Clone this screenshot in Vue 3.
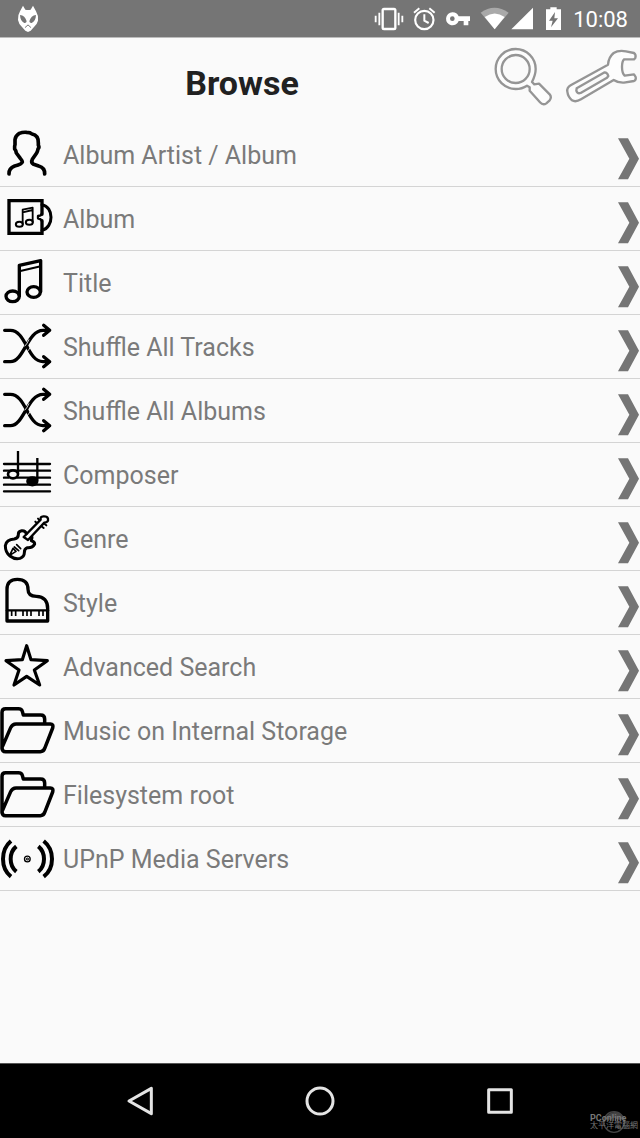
<script setup>
const items = [
  { icon: 'artist', label: 'Album Artist / Album', box: '0 9 168 189' },
  { icon: 'album', label: 'Album', box: '0 201 168 189' },
  { icon: 'title', label: 'Title', box: '0 3 168 189' },
  { icon: 'shuffle', label: 'Shuffle All Tracks', box: '0 195 168 189' },
  { icon: 'shuffle', label: 'Shuffle All Albums', box: '0 195 168 189' },
  { icon: 'composer', label: 'Composer', box: '0 189 168 189' },
  { icon: 'genre', label: 'Genre', box: '0 6 168 189' },
  { icon: 'style', label: 'Style', box: '0 198 168 189' },
  { icon: 'star', label: 'Advanced Search', box: '0 0 168 189' },
  { icon: 'folder', label: 'Music on Internal Storage', box: '0 192 168 189' },
  { icon: 'folder', label: 'Filesystem root', box: '0 192 168 189' },
  { icon: 'upnp', label: 'UPnP Media Servers', box: '0 201 168 189' }
]
</script>

<template>
  <div class="screen">
    <div class="status">
      <svg class="fox" viewBox="51 0 66 111" width="22" height="37" aria-hidden="true">
        <path fill="#fff" d="M69 17L76 29Q84 31 92 29L99 17L108 34Q116 47 114 62Q111 73 102 81L92 92L84 96L76 92L66 81Q56 72 54 60Q53 45 60 34Z" />
        <path fill="#757575" d="M60 45Q75 46 80 64Q79 70 73 69Q61 64 60 45ZM108 45Q93 46 88 64Q89 70 95 69Q107 64 108 45Z" />
        <path fill="none" stroke="#757575" stroke-width="3" d="M76 83Q79 77 84 75Q89 77 92 83" />
      </svg>
      <div class="tray">
        <svg viewBox="42 0 90 111" width="30" height="37" aria-hidden="true">
          <rect x="68" y="27" width="38" height="60" rx="4" fill="none" stroke="#fff" stroke-width="7" />
          <path stroke="#fff" stroke-width="5.500" d="M58 38V76M47 47V67M116 38V76M127 47V67" />
        </svg>
        <svg viewBox="159 0 69 111" width="23" height="37" aria-hidden="true">
          <circle cx="193" cy="60" r="27.500" fill="none" stroke="#fff" stroke-width="6.500" />
          <path fill="none" stroke="#fff" stroke-width="6" d="M162 38L178 25M224 38L208 25M193 43V62L206 69" />
        </svg>
        <svg viewBox="255 0 78 111" width="26" height="37" aria-hidden="true">
          <path fill="#fff" fill-rule="evenodd" d="M277 37A19.500 19.500 0 1 0 296 63H311V76H325V63H330V49H296A20 20 0 0 0 277 37ZM277 49A7 7 0 1 1 277 63A7 7 0 1 1 277 49Z" />
        </svg>
        <svg viewBox="360 0 162 111" width="54" height="37" aria-hidden="true">
          <path fill="#a9a9a9" d="M362 38Q403 8 446 38L404 88Z" />
          <path fill="#fff" d="M374 51Q404 30 434 51L404 88Z" />
          <path fill="#fff" d="M454 88L519 23V88Z" />
        </svg>
        <svg viewBox="549 0 57 111" width="19" height="37" aria-hidden="true">
          <path fill="#fff" d="M571 22H590V28H603V90H558V28H571Z" />
          <path fill="#757575" d="M585 36L567 62H578L573 82L594 55H583Z" />
        </svg>
        <time class="clock">10:08</time>
      </div>
    </div>

    <header class="header">
      <h1>Browse</h1>
      <button class="tool" aria-label="Search">
        <svg viewBox="36 0 210 255" width="70" height="85">
          <g fill="#fdfdfd" stroke="#959595" stroke-width="7" stroke-linejoin="round">
            <path d="M156 132Q167 110 167 93A60 60 0 1 0 107 153Q126 153 141 143L149 148V158L180 193Q189 203 199 196L209 187Q216 178 209 169L177 137L163 139Z" />
            <circle cx="107" cy="93" r="42" fill="#fafafa" />
          </g>
        </svg>
      </button>
      <button class="tool" aria-label="Settings">
        <svg viewBox="246 0 234 255" width="78" height="85">
          <g fill="#fdfdfd" stroke="#959595" stroke-width="7" stroke-linejoin="round">
            <path d="M384 80Q386 57 401 45Q415 36 438 40L462 45Q469 50 466 60L462 64H432Q426 70 426 87Q426 105 434 113L462 109L467 117Q469 126 462 129L432 134Q414 135 401 126L303 184Q287 194 276 187Q264 177 262 161Q260 149 272 142Z" />
            <path fill="#fafafa" d="M290 151L374 103Q382 103 385 114L381 119L302 165Q292 168 289 158Z" />
          </g>
        </svg>
      </button>
    </header>

    <main class="content">
      <ul class="list">
        <li v-for="item in items" :key="item.label">
          <button class="row">
            <svg class="icon" :viewBox="item.box" width="56" height="63" aria-hidden="true">
              <path v-if="item.icon === 'artist'" stroke-width="11" d="M27 162Q26 145 44 138Q65 133 67 126Q67 122 61 115L49 99Q48 91 44 87Q43 79 45 74V59Q46 48 58 40Q68 36 80 37Q91 37 96 42Q116 46 115 69V76Q119 81 114 87Q113 93 110 99L97 118Q92 128 101 133L116 138Q135 143 134 162" />
              <g v-else-if="item.icon === 'album'">
                <path stroke-width="10" stroke-linejoin="miter" d="M126 283V242H27V340H126V302" />
                <path stroke-width="7" d="M126 280L122 286L114 288V295L122 298L126 304" />
                <path stroke-width="9" d="M126 254C162 260 162 322 126 331" />
                <path stroke-width="5.500" d="M68 312V269L98 263V306M68 277L98 270" />
                <ellipse cx="58" cy="313" rx="10.500" ry="7.500" stroke-width="6" />
                <ellipse cx="88" cy="307" rx="10.500" ry="7.500" stroke-width="6" />
              </g>
              <g v-else-if="item.icon === 'title'">
                <path stroke-width="10" d="M58 137V46L122 32V125" />
                <path stroke-width="6" d="M58 64L122 49" />
                <ellipse cx="38" cy="139" rx="20" ry="16" stroke-width="10" />
                <ellipse cx="101" cy="126" rx="20" ry="16" stroke-width="10" />
              </g>
              <g v-else-if="item.icon === 'shuffle'" stroke-width="10">
                <path d="M14 335H31C72 335 82 241 129 241H149M131 226L149 241L131 256" />
                <path d="M14 241H31C78 241 82 335 129 335H149M131 320L149 335L131 350" />
                <path stroke="#fafafa" stroke-width="2.500" stroke-linecap="butt" d="M74 289Q82 281 87 268M79 308Q87 300 93 288" />
              </g>
              <g v-else-if="item.icon === 'composer'">
                <path stroke-width="7" d="M12 252H150M12 272H150M52 293H150M12 314H150M12 334H150M12 293H24" />
                <path stroke-width="7" stroke-linecap="butt" d="M54 213V282M112 234V302" />
                <ellipse cx="39" cy="283" rx="15" ry="12" fill="#fafafa" stroke-width="8" />
                <ellipse cx="97" cy="304" rx="15" ry="12" fill="#000" stroke-width="7" />
              </g>
              <g v-else-if="item.icon === 'genre'">
                <path stroke-width="9" d="M79 86Q76 76 65 77Q54 79 55 89Q55 99 43 102Q19 103 16 122Q16 142 30 153Q44 164 60 160Q73 155 73 143Q73 131 82 128Q98 129 104 117Q104 109 94 107L96 97" />
                <path stroke-width="7" d="M71 96L122 44Q120 35 130 34Q142 33 144 41Q146 52 133 53L84 105Z" />
                <path stroke-width="6" d="M111 54L106 50M119 46L114 41M126 65L131 69M134 57L139 61" />
                <path stroke-width="5" d="M50 119L62 131M43 126L56 137M39 130L48 139L29 151Z" />
              </g>
              <g v-else-if="item.icon === 'style'">
                <path stroke-width="10" d="M21 348V253Q21 223 52 223Q84 223 84 253Q84 274 109 274Q143 275 143 311V348Z" />
                <path stroke-width="7" d="M21 316H144" />
                <path stroke-width="5" stroke-linecap="butt" d="M35 317V333M47 317V333M69 317V333M81 317V333M93 317V333M117 317V333M129 317V333" />
              </g>
              <path v-else-if="item.icon === 'star'" stroke-width="9.500" d="M80 32L93 74L142 77L103 105L119 150L80 124L42 150L57 105L18 77L67 74Z" />
              <path v-else-if="item.icon === 'folder'" stroke-width="10.500" d="M6 342V232Q6 221 17 221H55Q65 221 67 229L70 240H122Q134 240 134 252V265M6 338L32 278Q37 267 48 267H151Q161 267 158 279L135 338Q131 350 121 350H17Q6 350 6 338" />
              <g v-else-if="item.icon === 'upnp'">
                <path stroke-width="12" stroke-linecap="butt" d="M33 243Q9 263 9 297Q9 331 33 350M49 259Q32 273 32 297Q32 321 49 335M131 243Q156 263 156 297Q156 331 131 350M115 259Q132 273 132 297Q132 321 115 335" />
                <circle cx="82" cy="297" r="8.500" stroke-width="4" />
                <circle cx="82" cy="297" r="3" stroke-width="3" />
              </g>
            </svg>
            <span class="label">{{ item.label }}</span>
            <svg class="chevron" viewBox="174 9 66 189" width="22" height="63" aria-hidden="true">
              <path d="M174 55H204L237 116L204 178H174L208 116Z" />
            </svg>
          </button>
        </li>
      </ul>
    </main>

    <nav class="nav" aria-label="System">
      <button aria-label="Back">
        <svg viewBox="0 0 90 90" width="30" height="30"><path d="M79 7V83L12 45Z" /></svg>
      </button>
      <button aria-label="Home">
        <svg viewBox="0 0 90 90" width="30" height="30"><circle cx="45" cy="45" r="39" /></svg>
      </button>
      <button aria-label="Recent apps">
        <svg viewBox="0 0 90 90" width="30" height="30"><rect x="11" y="11" width="68" height="68" /></svg>
      </button>
      <div class="mark">
        <svg viewBox="0 0 72 72" width="24" height="24" aria-hidden="true">
          <circle cx="36" cy="36" r="31" fill="none" stroke="#444" stroke-width="4" />
          <path fill="#444" d="M8 27Q20 6 38 6Q57 8 64 24Q56 32 44 27Q32 18 27 30Z" />
        </svg>
        <span class="brand">PConline</span>
        <span class="brand-cn">太平洋電腦網</span>
      </div>
    </nav>
  </div>
</template>

<style>
body {
  background: #fafafa;
}
</style>

<style scoped>
.screen {
  display: flex;
  flex-direction: column;
  min-height: 100vh;
  background: #fafafa;
  font-family: Roboto, "Noto Sans CJK SC", sans-serif;
}
svg {
  display: block;
  flex: none;
}
button {
  margin: 0;
  padding: 0;
  border: 0;
  background: none;
  font: inherit;
  color: inherit;
  cursor: pointer;
}
.status {
  display: flex;
  justify-content: space-between;
  padding: 0 12px 0 17px;
  background: #757575;
  border-bottom: 1px solid #bcbcbc;
}
.tray {
  display: flex;
  align-items: center;
  gap: 9px;
}
.clock {
  padding: 2px 0 0 2px;
  color: #fff;
  font-size: 22px;
  line-height: 35px;
}
.header {
  display: flex;
  align-items: center;
}
h1 {
  flex: 1;
  margin: 0;
  padding: 4px 8px 0 0;
  color: #212121;
  font-size: 34px;
  line-height: 42px;
  font-weight: 700;
  text-align: center;
}
.content {
  flex: 1;
}
.list {
  margin: 0;
  padding: 0;
  list-style: none;
}
.row {
  display: flex;
  align-items: center;
  width: 100%;
  border-bottom: 1px solid #d4d4d4;
  color: #7a7a7a;
  text-align: left;
}
.icon {
  fill: none;
  stroke: #000;
  stroke-linecap: round;
  stroke-linejoin: round;
}
.label {
  flex: 1;
  padding: 2px 0 0 7px;
  font-size: 25px;
  line-height: 32px;
}
.chevron {
  fill: #757575;
}
.nav {
  position: relative;
  display: grid;
  grid-template-columns: repeat(3, 1fr);
  padding: 0 50px;
  background: #000;
  border-top: 1px solid #555;
}
.nav button {
  display: flex;
  align-items: center;
  justify-content: center;
  height: 74px;
}
.nav button svg {
  fill: none;
  stroke: #e4e4e4;
  stroke-width: 9;
  stroke-linejoin: round;
}
.mark {
  position: absolute;
  right: 2px;
  bottom: 8px;
  display: flex;
  flex-direction: column;
  width: 48px;
  color: #777;
}
.mark svg {
  position: absolute;
  left: 12px;
  bottom: -4px;
}
.brand,
.brand-cn {
  position: relative;
  line-height: 8px;
  white-space: nowrap;
}
.brand {
  font-size: 9px;
  font-weight: 700;
}
.brand-cn {
  font-size: 8px;
}
</style>
